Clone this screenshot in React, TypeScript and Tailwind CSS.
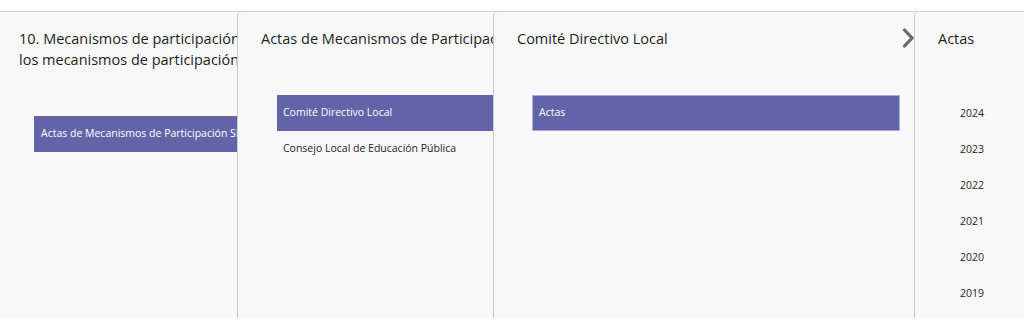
import React from 'react';

const font = { fontFamily: '"Open Sans", "Noto Sans", sans-serif' };

const Chevron = () => (
  <svg width="12" height="20" viewBox="0 0 12 20" className="absolute right-0 top-[16px]">
    <path d="M2.5 2 L10 10 L2.5 18" fill="none" stroke="#6a6a6a" strokeWidth="3.2" strokeLinecap="round" />
  </svg>
);

const years = ['2024', '2023', '2022', '2021', '2020', '2019'];

export default function App() {
  return (
    <div className="w-[1024px] h-[327px] bg-white pt-[11px]" style={font}>
      <div className="flex h-[307px] border-t border-[#d2d2d2] bg-[#f8f8f8] overflow-hidden">
        {/* Panel 1 */}
        <div className="w-[237px] shrink-0 overflow-hidden">
          <div className="w-[420px] pl-[19px] pt-[16px]">
            <p className="text-[14.5px] leading-[21px] text-[#201f1e]">
              10. Mecanismos de participación ciudadana
              <br />
              los mecanismos de participación ciudadana
            </p>
            <div className="mt-[46px] ml-[15px] h-[36px] bg-[#6264a7] text-white text-[10.5px] flex items-center px-[7px]">
              Actas de Mecanismos de Participación SLEP
            </div>
          </div>
        </div>

        {/* Panel 2 */}
        <div className="w-[256px] shrink-0 overflow-hidden border-l border-[#cacaca] rounded-tl-[4px]">
          <div className="w-[420px] pl-[23px] pt-[16px]">
            <p className="text-[14.5px] leading-[21px] text-[#201f1e] whitespace-nowrap">
              Actas de Mecanismos de Participación SLEP
            </p>
            <div className="mt-[46px] ml-[16px]">
              <div className="h-[36px] bg-[#6264a7] text-white text-[10.5px] flex items-center px-[6px]">
                Comité Directivo Local
              </div>
              <div className="h-[36px] text-[#252423] text-[10.5px] flex items-center px-[6px]">
                Consejo Local de Educación Pública
              </div>
            </div>
          </div>
        </div>

        {/* Panel 3 */}
        <div className="w-[421px] shrink-0 overflow-hidden border-l border-[#cacaca] rounded-tl-[4px] relative">
          <Chevron />
          <div className="pl-[23px] pr-[14px] pt-[16px]">
            <p className="text-[14.5px] leading-[21px] text-[#201f1e]">Comité Directivo Local</p>
            <div className="mt-[46px] ml-[15px] h-[36px] bg-[#6264a7] border border-[#a9aae2] text-white text-[10.5px] flex items-center px-[6px]">
              Actas
            </div>
          </div>
        </div>

        {/* Panel 4 */}
        <div className="flex-1 overflow-hidden border-l border-[#cacaca] rounded-tl-[4px]">
          <div className="pl-[23px] pt-[16px]">
            <p className="text-[14.5px] leading-[21px] text-[#201f1e]">Actas</p>
            <div className="mt-[47px] ml-[16px]">
              {years.map((y) => (
                <div key={y} className="h-[36px] text-[#252423] text-[10.5px] flex items-center px-[6px]">
                  {y}
                </div>
              ))}
            </div>
          </div>
        </div>
      </div>
    </div>
  );
}
